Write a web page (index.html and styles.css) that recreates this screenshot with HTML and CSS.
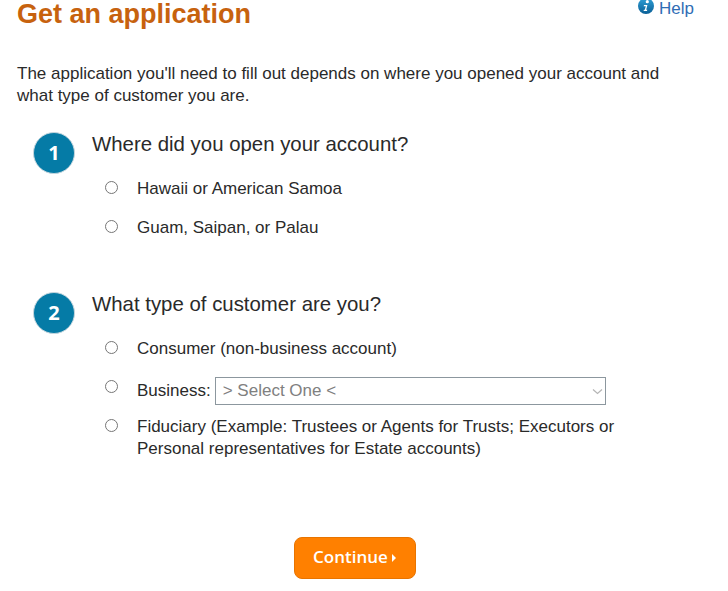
FILE: index.html
```html
<!DOCTYPE html>
<html lang="en">
<head>
<meta charset="utf-8">
<title>Get an application</title>
<link rel="stylesheet" href="styles.css">
</head>
<body>
<main class="page">
  <header class="top">
    <h1 class="title">Get an application</h1>
    <a class="help" href="#">
      <svg class="help-icon" viewBox="0 0 16 16" aria-hidden="true">
        <defs><linearGradient id="ig" x1="0" y1="0" x2="0" y2="1"><stop offset="0" stop-color="#2f9fd6"/><stop offset="1" stop-color="#0a5f96"/></linearGradient></defs>
        <circle cx="8" cy="8" r="8" fill="url(#ig)"/>
        <circle cx="9.300" cy="3.700" r="1.600" fill="#fff"/>
        <path d="M6 7h3.400L8.200 11.800h1.100l-.3 1.200H5.600l.3-1.200h.9L7.800 8.200H5.700z" fill="#fff"/>
      </svg>Help</a>
  </header>
  <p class="intro">The application you'll need to fill out depends on where you opened your account and what type of customer you are.</p>

  <section class="step step-one">
    <div class="badge">1</div>
    <div class="step-body">
      <h2 class="question">Where did you open your account?</h2>
      <label class="option"><input type="radio" name="where"><span>Hawaii or American Samoa</span></label>
      <label class="option"><input type="radio" name="where"><span>Guam, Saipan, or Palau</span></label>
    </div>
  </section>

  <section class="step step-two">
    <div class="badge">2</div>
    <div class="step-body">
      <h2 class="question">What type of customer are you?</h2>
      <label class="option"><input type="radio" name="type"><span>Consumer (non-business account)</span></label>
      <div class="option option-select"><input type="radio" name="type"><span>Business:</span><select class="select"><option>&gt; Select One &lt;</option></select></div>
      <label class="option option-long"><input type="radio" name="type"><span class="long-text">Fiduciary (Example: Trustees or Agents for Trusts; Executors or Personal representatives for Estate accounts)</span></label>
    </div>
  </section>

  <div class="actions"><button class="continue" type="button"><span class="continue-label">Continue</span><span class="caret"></span></button></div>
</main>
</body>
</html>
```

FILE: styles.css
```css
* { box-sizing: border-box; }
html, body { margin: 0; padding: 0; background: #fff; }
body { font-family: "Liberation Sans", Arial, sans-serif; font-size: 17px; line-height: 22px; color: #2a2a2a; overflow: hidden; }
.page { width: 728px; height: 591px; padding: 0 34px 0 17px; }
.top { display: flex; justify-content: space-between; align-items: flex-start; }
.title { margin: 0; font-size: 27px; line-height: 28px; font-weight: 700; color: #c7620e; }
.help { display: flex; align-items: flex-start; gap: 5px; color: #2f6db5; text-decoration: none; font-size: 17px; line-height: 18px; }
.help-icon { width: 16px; height: 16px; margin-top: -2px; }
.intro { margin: 35px 0 0; }
.step { display: flex; margin-left: 16px; }
.step-one { margin-top: 24px; }
.step-two { margin-top: 52px; }
.badge { flex: none; width: 42px; height: 42px; margin-top: 1px; border-radius: 50%; background: #057ba6; border: 1px solid #c4d6de; color: #fff; font-family: "Open Sans", sans-serif; font-weight: 700; font-size: 20px; line-height: 40px; text-align: center; }
.step-body { margin-left: 17px; flex: 1; }
.question { margin: 0; font-size: 20.4px; line-height: 26px; font-weight: 400; }
.option { display: flex; align-items: flex-start; margin: 0 0 0 13px; }
.option input { appearance: none; flex: none; width: 13px; height: 13px; margin: 3px 19px 0 0; border: 1.5px solid #767676; border-radius: 50%; background: #fff; }
.question + .option { margin-top: 21px; }
.option + .option { margin-top: 17px; }
.option + .option-select { align-items: center; margin-top: 17px; height: 28px; }
.option-select input { margin-top: -9px; }
.option-select + .option-long { margin-top: 11px; }
.long-text { max-width: 490px; }
.select { appearance: none; width: 391px; height: 28px; margin-left: 4px; padding: 0 7px 2px; border: 1px solid #8c979e; border-radius: 0; background: #fff url("data:image/svg+xml,%3Csvg xmlns='http://www.w3.org/2000/svg' width='11' height='7'%3E%3Cpath d='M1 1.500l4.500 4 4.500-4' fill='none' stroke='%23b5b5b5' stroke-width='1.200'/%3E%3C/svg%3E") no-repeat right 2px center; color: #808080; font-family: "Liberation Sans", Arial, sans-serif; font-size: 17px; }
.actions { display: flex; justify-content: center; margin-top: 77px; padding-right: 2px; }
.continue { display: flex; align-items: center; justify-content: center; width: 122px; height: 42px; padding: 0 0 3px; border: 1px solid #e87400; border-radius: 8px; background: #ff8000; color: #fff; font-family: "Open Sans", sans-serif; font-weight: 600; font-size: 17px; }
.caret { width: 0; height: 0; margin: 3px 0 0 4px; border-left: 4px solid #fff; border-top: 4px solid transparent; border-bottom: 4px solid transparent; }
```
